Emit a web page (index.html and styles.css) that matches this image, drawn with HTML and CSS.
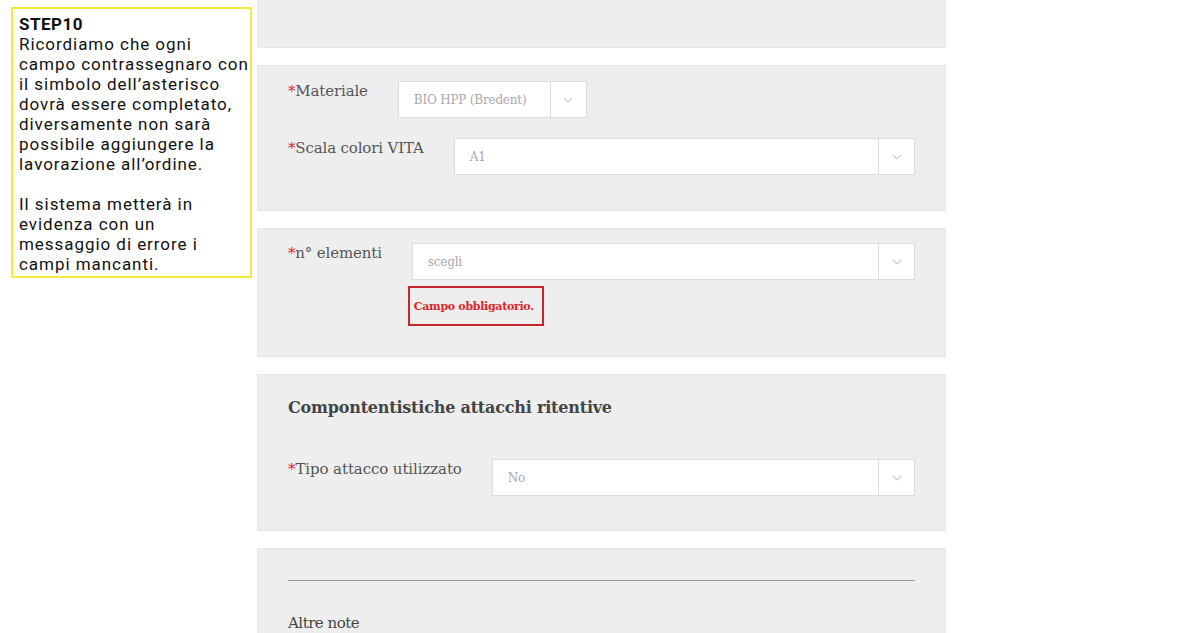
FILE: index.html
```html
<!DOCTYPE html>
<html lang="it">
<head>
<meta charset="utf-8">
<link rel="stylesheet" href="styles.css">
</head>
<body>
<div class="page">
  <aside class="note">
    <p><strong>STEP10</strong><br>Ricordiamo che ogni<br>campo contrassegnaro con<br>il simbolo dell’asterisco<br>dovrà essere completato,<br>diversamente non sarà<br>possibile aggiungere la<br>lavorazione all’ordine.</p>
    <p>Il sistema metterà in<br>evidenza con un<br>messaggio di errore i<br>campi mancanti.</p>
  </aside>
  <main class="form">
    <section class="panel panel-top"></section>

    <section class="panel panel-mat">
      <div class="row">
        <label class="lbl"><span class="req">*</span>Materiale</label>
        <div class="select select-fixed"><span class="val">BIO HPP (Bredent)</span><span class="arrow"><svg width="10" height="6" viewBox="0 0 10 6"><path d="M1 1l4 4 4-4" fill="none" stroke="#ccc" stroke-width="1.2"/></svg></span></div>
      </div>
      <div class="row">
        <label class="lbl"><span class="req">*</span>Scala colori VITA</label>
        <div class="select"><span class="val">A1</span><span class="arrow"><svg width="10" height="6" viewBox="0 0 10 6"><path d="M1 1l4 4 4-4" fill="none" stroke="#ccc" stroke-width="1.2"/></svg></span></div>
      </div>
    </section>

    <section class="panel panel-el">
      <div class="row">
        <label class="lbl"><span class="req">*</span>n° elementi</label>
        <div class="field">
          <div class="select select-full"><span class="val">scegli</span><span class="arrow"><svg width="10" height="6" viewBox="0 0 10 6"><path d="M1 1l4 4 4-4" fill="none" stroke="#ccc" stroke-width="1.2"/></svg></span></div>
          <div class="error">Campo obbligatorio.</div>
        </div>
      </div>
    </section>

    <section class="panel panel-att">
      <h2 class="title">Compontentistiche attacchi ritentive</h2>
      <div class="row">
        <label class="lbl lbl-tipo"><span class="req">*</span>Tipo attacco utilizzato</label>
        <div class="select"><span class="val">No</span><span class="arrow"><svg width="10" height="6" viewBox="0 0 10 6"><path d="M1 1l4 4 4-4" fill="none" stroke="#ccc" stroke-width="1.2"/></svg></span></div>
      </div>
    </section>

    <section class="panel panel-notes">
      <hr class="sep">
      <div class="notes-label">Altre note</div>
    </section>
  </main>
</div>
</body>
</html>
```

FILE: styles.css
```css
html, body {
  margin: 0;
  padding: 0;
  background: #ffffff;
  height: 633px;
  overflow: hidden;
}
.page {
  display: flex;
  align-items: flex-start;
}
.note {
  box-sizing: border-box;
  margin: 7px 0 0 11px;
  width: 241px;
  height: 271px;
  border: 2px solid #f2ea3c;
  padding: 5px 0 0 6px;
  font-family: Roboto, "Noto Sans", sans-serif;
  font-size: 17px;
  line-height: 20px;
  letter-spacing: 0.95px;
  color: #111;
  white-space: nowrap;
}
.note p {
  margin: 0 0 20px 0;
}
.note strong {
  font-weight: 700;
  letter-spacing: 0.5px;
}
.form {
  margin-left: 5px;
  width: 689px;
  display: flex;
  flex-direction: column;
  gap: 17px;
  font-family: "DejaVu Serif", serif;
}
.panel {
  background: #eeeeee;
  border: 1px solid #e6e6e6;
  padding: 0 30px;
}
.panel-top {
  height: 47px;
  border-top: none;
}
.panel-mat {
  padding-top: 15px;
  padding-bottom: 35px;
  display: flex;
  flex-direction: column;
  gap: 20px;
}
.panel-el {
  padding-top: 14px;
  padding-bottom: 30px;
}
.panel-att {
  padding-top: 21px;
  padding-bottom: 34px;
}
.panel-notes {
  padding-top: 31px;
  height: 100px;
}
.row {
  display: flex;
  align-items: flex-start;
  gap: 30px;
}
.lbl {
  font-size: 15px;
  line-height: 20px;
  color: #555;
  white-space: nowrap;
  letter-spacing: -0.15px;
}
.lbl-tipo {
  letter-spacing: -0.1px;
}
.req {
  color: #d9262c;
}
.field {
  flex: 1;
  display: flex;
  flex-direction: column;
  align-items: flex-start;
}
.select {
  flex: 1;
  height: 35px;
  background: #fff;
  border: 1px solid #dcdcdc;
  display: flex;
  align-items: center;
  font-size: 12px;
  color: #a8a8a8;
}
.select-fixed {
  flex: 0 0 187px;
}
.select-full {
  flex: none;
  align-self: stretch;
}
.val {
  flex: 1;
  padding-left: 15px;
  letter-spacing: -0.2px;
}
.arrow {
  width: 35px;
  height: 100%;
  border-left: 1px solid #dcdcdc;
  display: flex;
  align-items: center;
  justify-content: center;
}
.error {
  margin: 6px 0 0 -4px;
  border: 2px solid #c9252c;
  padding: 0 4px;
  height: 36px;
  width: 124px;
  display: flex;
  align-items: center;
  font-size: 11px;
  font-weight: 700;
  color: #d9262c;
  letter-spacing: -0.3px;
}
.title {
  margin: 0 0 39px 0;
  font-size: 16px;
  line-height: 24px;
  font-weight: 700;
  color: #444;
  letter-spacing: -0.2px;
}
.sep {
  margin: 0;
  border: none;
  border-top: 1px solid #999;
}
.notes-label {
  margin-top: 32px;
  font-size: 15px;
  line-height: 20px;
  color: #444;
  letter-spacing: -0.5px;
  border-bottom: 1px solid #bbb;
  padding-bottom: 1px;
  margin-right: 8px;
}
```
